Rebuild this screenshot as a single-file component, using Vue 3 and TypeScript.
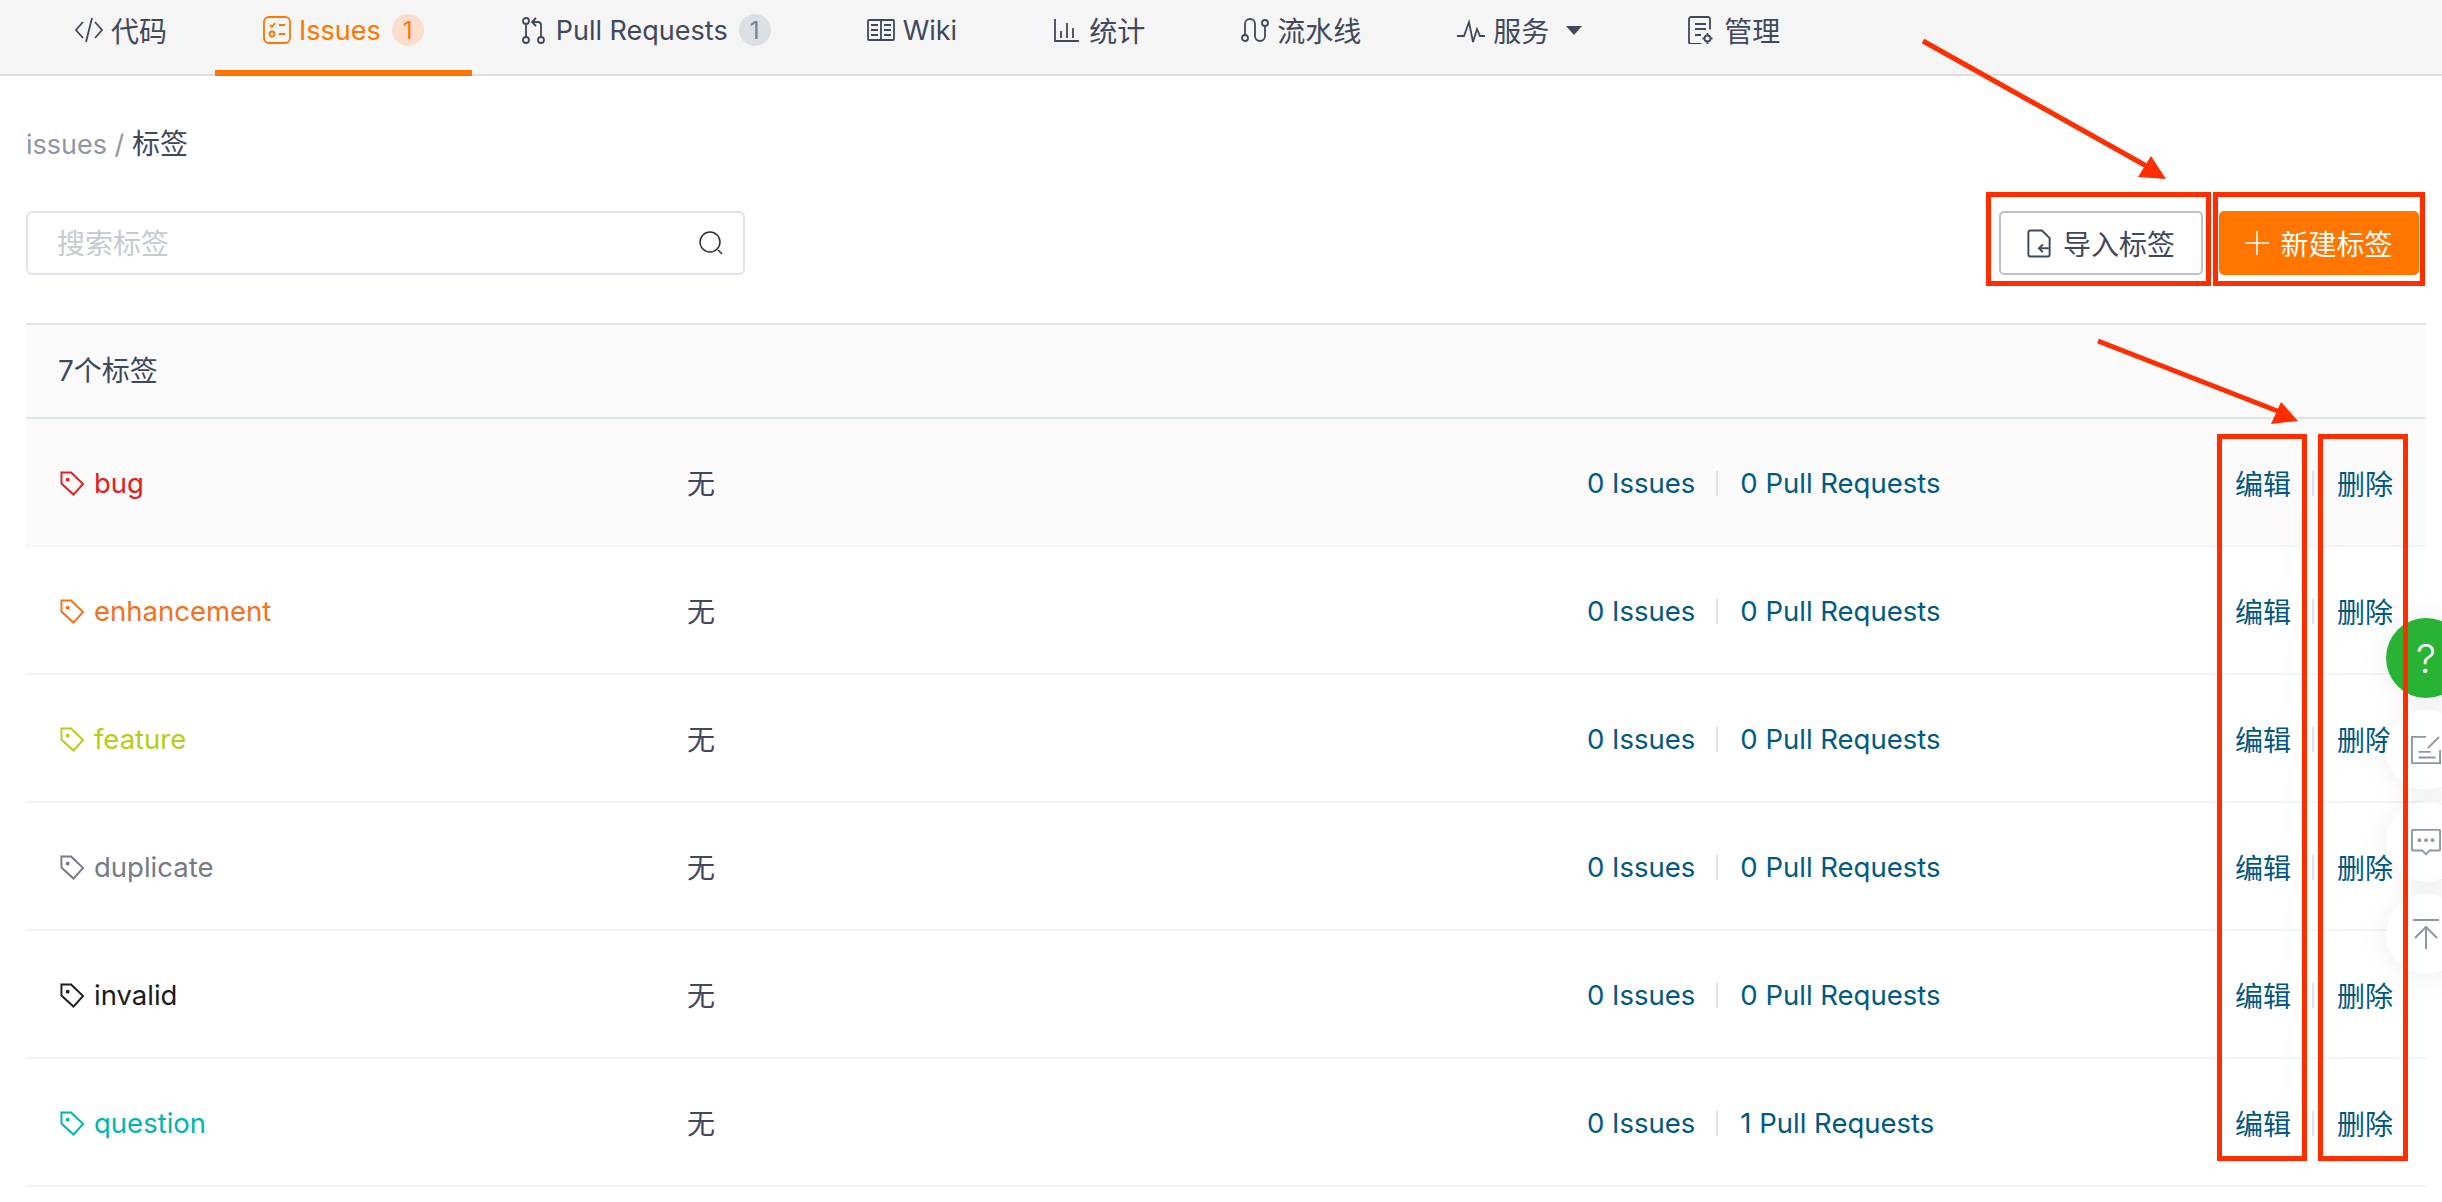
<template>
  <div class="page">
    <nav class="tabs">
      <a
        v-for="t in tabs"
        :key="t.name"
        class="tab"
        :class="{ active: t.active, last: t.name === '管理', latin: /[a-z]/i.test(t.name) }"
      >
        <svg class="tab-icon" viewBox="0 0 28 28" fill="none" stroke="currentColor" stroke-width="1.8">
          <path v-for="(d, i) in t.icon" :key="i" :d="d" />
        </svg>
        <span>{{ t.name }}</span>
        <span v-if="t.badge" class="badge">{{ t.badge }}</span>
        <i v-if="t.caret" class="caret" />
      </a>
    </nav>

    <main class="content">
      <div class="crumb"><span class="crumb-link">issues / </span>标签</div>

      <div class="toolbar">
        <div class="search">
          <input type="text" placeholder="搜索标签" />
          <svg viewBox="0 0 24 24" fill="none" stroke="#2b2f36" stroke-width="1.5">
            <circle cx="11" cy="11" r="10" />
            <path d="M19 19l4 4" />
          </svg>
        </div>
        <div class="buttons">
          <button class="btn">
            <svg viewBox="0 0 24 30" fill="none" stroke="currentColor" stroke-width="2">
              <path d="M15 1.500H3a2 2 0 0 0-2 2v23a2 2 0 0 0 2 2h18a2 2 0 0 0 2-2V9.500z" />
              <path d="M22 20H12M16 16l-4 4 4 4" />
            </svg>
            导入标签
          </button>
          <button class="btn primary">
            <svg viewBox="0 0 24 24" fill="none" stroke="currentColor" stroke-width="1.6">
              <path d="M0 12h24M12 0v24" />
            </svg>
            新建标签
          </button>
        </div>
      </div>

      <section class="table">
        <header class="table-head">7个标签</header>
        <div v-for="(l, i) in labels" :key="l.name" class="row" :class="{ hover: i === 0 }">
          <span class="label-name" :style="{ color: l.color }">
            <svg viewBox="0 0 26 26" fill="none" stroke="currentColor" stroke-width="2">
              <path d="M1.500 1.500h10l12.500 12-10 11L1.500 13z" />
              <circle cx="8" cy="9" r="2" fill="currentColor" stroke="none" />
            </svg>
            {{ l.name }}
          </span>
          <span class="desc">无</span>
          <span class="stats">
            <a>0 Issues</a><i class="sep" /><a>{{ l.pulls }} Pull Requests</a>
          </span>
          <span class="actions">
            <a>编辑</a><i class="sep" /><a>删除</a>
          </span>
        </div>
      </section>
    </main>

    <aside class="floats">
      <div class="float green">?</div>
      <div class="float">
        <svg viewBox="0 0 32 32" fill="none" stroke="#8e96a3" stroke-width="2">
          <path d="M16 2H1v28h30V16M8 18h13M8 24h18M18 14L30 2" />
        </svg>
      </div>
      <div class="float">
        <svg viewBox="0 0 32 28" fill="none" stroke="#8e96a3" stroke-width="2">
          <path d="M2 1h28a1 1 0 0 1 1 1v20a1 1 0 0 1-1 1H20l-4 4-4-4H2a1 1 0 0 1-1-1V2a1 1 0 0 1 1-1z" />
          <circle cx="9" cy="12" r="2" fill="#8e96a3" stroke="none" />
          <circle cx="16" cy="12" r="2" fill="#8e96a3" stroke="none" />
          <circle cx="23" cy="12" r="2" fill="#8e96a3" stroke="none" />
        </svg>
      </div>
      <div class="float">
        <svg viewBox="0 0 28 30" fill="none" stroke="#8e96a3" stroke-width="2">
          <path d="M1 1h26M14 8v22M3 19L14 8l11 11" />
        </svg>
      </div>
    </aside>

    <!-- red review marks drawn over the finished page -->
    <svg class="marks" viewBox="0 0 2442 1202" fill="none" stroke="#ff2d00" stroke-width="5">
      <rect x="1988.500" y="194.500" width="220" height="89" />
      <rect x="2215.500" y="194.500" width="207" height="89" />
      <rect x="2219.500" y="436.500" width="85" height="722" />
      <rect x="2320.500" y="436.500" width="85" height="722" />
      <path d="M1923 41L2150 168M2098 341L2280 412" />
      <path d="M2151 156L2138 177L2166 179z" fill="#ff2d00" stroke="none" />
      <path d="M2281 402L2271 424L2298 421z" fill="#ff2d00" stroke="none" />
    </svg>
  </div>
</template>

<script setup lang="ts">
interface Tab {
  name: string
  icon: string[]
  badge?: number
  active?: boolean
  caret?: boolean
}

const tabs: Tab[] = [
  { name: '代码', icon: ['M8 6l-7 8 7 8M20 6l7 8-7 8M17 2l-6 24'] },
  {
    name: 'Issues',
    active: true,
    badge: 1,
    icon: [
      'M6 1h16a5 5 0 0 1 5 5v16a5 5 0 0 1-5 5H6a5 5 0 0 1-5-5V6a5 5 0 0 1 5-5z',
      'M7 9l2 2 3-4M16 9h6M16 18h6',
      'M11.500 18a2.500 2.500 0 1 1-5 0 2.500 2.500 0 0 1 5 0z'
    ]
  },
  {
    name: 'Pull Requests',
    badge: 1,
    icon: [
      'M6 8a3 3 0 1 1 0-6 3 3 0 0 1 0 6zM6 27a3 3 0 1 1 0-6 3 3 0 0 1 0 6zM6 8v13',
      'M21 27a3 3 0 1 1 0-6 3 3 0 0 1 0 6zM21 21V9a3 3 0 0 0-3-3h-5M16 2l-4 4 4 4'
    ]
  },
  {
    name: 'Wiki',
    icon: ['M2 4h24a1 1 0 0 1 1 1v18a1 1 0 0 1-1 1H2a1 1 0 0 1-1-1V5a1 1 0 0 1 1-1zM14 4v20M4 9h7M4 14h7M4 19h7M17 9h7M17 14h7M17 19h7']
  },
  { name: '统计', icon: ['M2 3v22h24M8 22v-7M14 22V7M20 22V12'] },
  {
    name: '流水线',
    icon: [
      'M4 19V8a5 5 0 0 1 10 0v12a5 5 0 0 0 10 0V10',
      'M7 22a3 3 0 1 1-6 0 3 3 0 0 1 6 0zM27 7a3 3 0 1 1-6 0 3 3 0 0 1 6 0z'
    ]
  },
  { name: '服务', caret: true, icon: ['M0 20h7l5-14 4 20 4-13 3 7h5'] },
  {
    name: '管理',
    icon: [
      'M22 13.500V3a2 2 0 0 0-2-2H3a2 2 0 0 0-2 2v23a2 2 0 0 0 2 2h10.500M7 8h11M7 13h11M7 19h6',
      'M22.500 22.500a3 3 0 1 1-6 0 3 3 0 0 1 6 0zM19.500 17v2M19.500 26v2M14.500 22.500h2M22.500 22.500h2'
    ]
  }
]

const labels = [
  { name: 'bug', color: '#e02020', pulls: 0 },
  { name: 'enhancement', color: '#f2711c', pulls: 0 },
  { name: 'feature', color: '#b5cc18', pulls: 0 },
  { name: 'duplicate', color: '#767a85', pulls: 0 },
  { name: 'invalid', color: '#1b1c1d', pulls: 0 },
  { name: 'question', color: '#00b5ad', pulls: 1 }
]
</script>

<style>
html,
body {
  margin: 0;
  overflow: hidden;
  background: #fff;
}
</style>

<style scoped>
.page {
  position: relative;
  width: 2442px;
  height: 1202px;
  overflow: hidden;
  font-family: Inter, 'Noto Sans CJK SC', sans-serif;
  font-size: 28px;
  color: #40485b;
}

.tabs {
  display: flex;
  height: 74px;
  padding-left: 27px;
  background: #f5f5f5;
  border-bottom: 2px solid #dedede;
}

.tab {
  display: flex;
  align-items: center;
  gap: 8px;
  height: 76px;
  padding: 0 48px 16px;
  box-sizing: border-box;
  white-space: nowrap;
}

.tab.latin {
  font-size: 27px;
}

.tab.last {
  margin-left: 10px;
}

.tab.active {
  color: #ff7500;
  border-bottom: 6px solid #ff7500;
  padding-bottom: 10px;
}

.tab-icon {
  width: 28px;
  height: 28px;
  flex: none;
}

.badge {
  display: flex;
  align-items: center;
  justify-content: center;
  width: 32px;
  height: 32px;
  margin-left: 3px;
  border-radius: 50%;
  background: #dcdfe3;
  color: #6f8498;
  font-size: 24px;
}

.tab.active .badge {
  background: #fcdccb;
  color: #ff7500;
}

.caret {
  width: 0;
  height: 0;
  margin-left: 9px;
  border-style: solid;
  border-width: 9px 8.500px 0;
  border-color: #40485b transparent transparent;
}

.content {
  padding: 0 16px 0 26px;
}

.crumb {
  height: 40px;
  margin-top: 48px;
  line-height: 40px;
}

.crumb-link {
  color: #8e96a3;
  font-size: 27px;
}

.toolbar {
  display: flex;
  justify-content: space-between;
  margin-top: 47px;
  padding-right: 7px;
}

.search {
  display: flex;
  align-items: center;
  width: 719px;
  height: 64px;
  padding: 0 20px 0 29px;
  box-sizing: border-box;
  border: 2px solid #dde3ea;
  border-radius: 6px;
}

.search input {
  flex: 1;
  min-width: 0;
  border: 0;
  outline: 0;
  padding: 2px 0 0;
  background: none;
  font: inherit;
}

.search input::placeholder {
  color: #c5cad1;
}

.search svg {
  width: 24px;
  height: 24px;
}

.buttons {
  display: flex;
  gap: 16px;
}

.btn {
  display: flex;
  align-items: center;
  justify-content: center;
  gap: 12px;
  width: 204px;
  height: 64px;
  box-sizing: border-box;
  border: 2px solid #bcc1c9;
  border-radius: 5px;
  background: #fff;
  color: #40485b;
  font: inherit;
}

.btn svg {
  width: 24px;
  height: 29px;
}

.btn.primary {
  gap: 11px;
  width: 200px;
  border-color: #ff7500;
  background: #ff7500;
  color: #fff;
}

.btn.primary svg {
  height: 24px;
}

.table {
  margin-top: 48px;
}

.table-head {
  height: 92px;
  padding-left: 32px;
  background: #fafafa;
  border-top: 2px solid #dce5ea;
  border-bottom: 2px solid #dce5ea;
  line-height: 92px;
}

.row {
  display: grid;
  grid-template-columns: 627px 900px 1fr auto;
  align-items: center;
  height: 128px;
  padding: 0 33px 0 34px;
  box-sizing: border-box;
  border-bottom: 2px solid #f3f4f5;
}

.row.hover {
  background: #fafafa;
}

.label-name {
  display: flex;
  align-items: center;
  gap: 9px;
  padding-top: 2px;
  font-size: 27.500px;
}

.label-name svg {
  width: 25px;
  height: 25px;
  flex: none;
}

.stats,
.actions {
  display: flex;
  align-items: center;
  padding-top: 2px;
  color: #005980;
}

.stats {
  font-size: 27.500px;
}

.sep {
  width: 2px;
  height: 25px;
  margin: 0 22px 0 21px;
  background: #dde3ea;
}

.actions .sep {
  margin: 0 23px 0 21px;
}

.floats {
  position: absolute;
  top: 618px;
  right: -24px;
  display: flex;
  flex-direction: column;
  gap: 12px;
}

.float {
  display: flex;
  align-items: center;
  justify-content: center;
  width: 80px;
  height: 80px;
  border-radius: 50%;
  background: #fff;
  box-shadow: 0 2px 30px rgba(0, 0, 0, 0.08);
}

.float svg {
  width: 30px;
  height: 30px;
}

.float.green {
  background: #28b335;
  color: #fff;
  font-size: 40px;
  font-weight: 300;
}

.marks {
  position: absolute;
  inset: 0;
  width: 2442px;
  height: 1202px;
  pointer-events: none;
}
</style>
